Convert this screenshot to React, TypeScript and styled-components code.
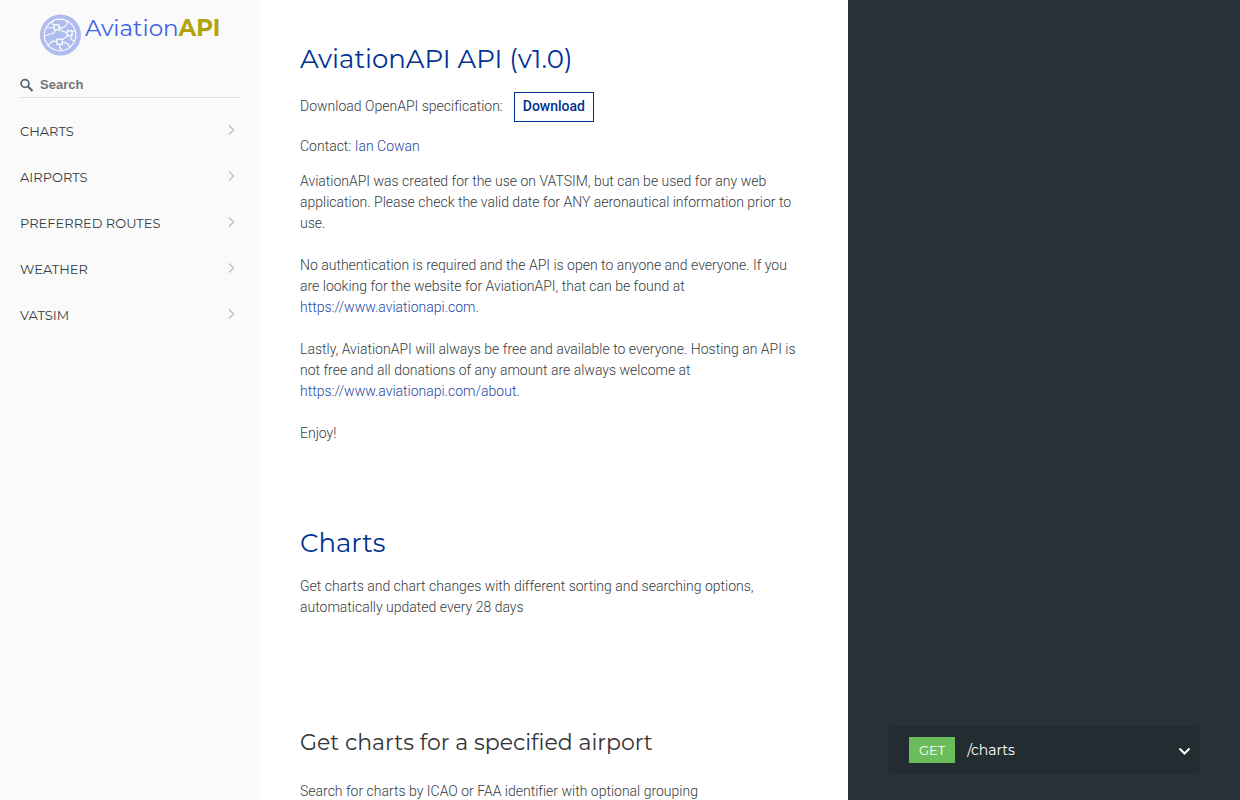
import React from "react";
import styled, { createGlobalStyle } from "styled-components";

const headingFont = `Montserrat, Inter, "Open Sans", sans-serif`;
const bodyFont = `Roboto, "Liberation Sans", sans-serif`;
const textColor = "#353c42";

const GlobalStyle = createGlobalStyle`
  *, *::before, *::after { box-sizing: border-box; }
  body {
    margin: 0;
    background: #fff;
    color: ${textColor};
    font-family: ${bodyFont};
    font-size: 14px;
    font-weight: 300;
    line-height: 21px;
    text-rendering: optimizeSpeed;
    -webkit-font-smoothing: antialiased;
  }
`;

const Page = styled.div`
  display: flex;
  min-height: 100vh;
`;

const Sidebar = styled.aside`
  flex: 0 0 260px;
  align-self: flex-start;
  position: sticky;
  top: 0;
  height: 100vh;
  background: #fafafa;
  display: flex;
  flex-direction: column;
`;

const LogoLink = styled.a`
  display: flex;
  gap: 4px;
  padding: 14px 0 0 39px;
  text-decoration: none;
`;

const LogoMark = styled.svg`
  flex: none;
  width: 42px;
  height: 42px;
`;

const LogoText = styled.span`
  font-family: ${headingFont};
  font-size: 23px;
  font-weight: 400;
  line-height: 28px;
  color: #3f62e6;
  white-space: nowrap;

  b {
    color: #b0a310;
    font-weight: 700;
  }
`;

const SearchBox = styled.label`
  display: flex;
  align-items: center;
  gap: 6px;
  margin: 17px 20px 0;
  height: 25px;
  border-bottom: 1px solid #e1e1e1;

  svg {
    flex: none;
    width: 14px;
    height: 14px;
  }
`;

const SearchInput = styled.input`
  flex: 1;
  min-width: 0;
  height: 22px;
  margin-bottom: 2px;
  border: 0;
  padding: 0;
  outline: none;
  background: transparent;
  color: #263238;
  font-family: "Liberation Sans", Arial, sans-serif;
  font-size: 13px;
  font-weight: 700;

  &::placeholder {
    color: #757575;
    opacity: 1;
  }
`;

const Menu = styled.ul`
  list-style: none;
  margin: 10px 0 0;
  padding: 0;
`;

const MenuLink = styled.a`
  display: flex;
  align-items: center;
  justify-content: space-between;
  height: 46px;
  padding: 0 20px;
  color: ${textColor};
  font-family: ${headingFont};
  font-size: 13px;
  font-weight: 400;
  text-transform: uppercase;
  text-decoration: none;

  svg {
    width: 18px;
    height: 18px;
  }
`;

const Content = styled.main`
  flex: 1;
  min-width: 0;
  display: flex;
  flex-direction: column;
`;

const Row = styled.section<{ $grow?: boolean }>`
  display: grid;
  grid-template-columns: 3fr 2fr;
  flex: ${(p) => (p.$grow ? 1 : "none")};
`;

const Middle = styled.div<{ $bottom?: number }>`
  padding: 40px 40px ${(p) => p.$bottom ?? 40}px;

  p {
    margin: 0 0 21px;
  }

  p:last-child {
    margin-bottom: 0;
  }
`;

const Samples = styled.div`
  background: #263238;
  padding: 40px 40px 0;
`;

const Title = styled.h1`
  margin: 0 0 14px;
  color: #003292;
  font-family: ${headingFont};
  font-size: 26px;
  font-weight: 400;
  line-height: 38px;
`;

const OperationTitle = styled.h2`
  margin: 0 0 21px;
  color: #333;
  font-family: ${headingFont};
  font-size: 22px;
  font-weight: 400;
  line-height: 34px;
`;

const DownloadLine = styled.div`
  display: flex;
  align-items: baseline;
  gap: 11px;
  height: 30px;
`;

const DownloadLink = styled.a`
  border: 1px solid #003292;
  padding: 3px 8px 4px;
  color: #003292;
  font-weight: 500;
  text-decoration: none;
`;

const Contact = styled.div`
  margin: 14px 0;
`;

const TextLink = styled.a`
  color: #1f47a3;
  text-decoration: none;
`;

const Endpoint = styled.button`
  display: flex;
  align-items: center;
  width: 100%;
  height: 48px;
  padding: 0 8px 0 21px;
  border: 0;
  border-radius: 4px;
  background: #222c31;
  color: #fff;
  font-family: ${headingFont};
  font-size: 14px;
  text-align: left;
  text-rendering: optimizeSpeed;
  cursor: pointer;

  svg {
    width: 15px;
    height: 15px;
    margin-left: auto;
  }
`;

const Verb = styled.span`
  padding: 3px 10px;
  margin-right: 12px;
  background: #6bbd5b;
  font-size: 13px;
  line-height: 20px;
`;

const groups = ["Charts", "Airports", "Preferred Routes", "Weather", "VATSIM"];

const Globe = () => (
  <LogoMark viewBox="0 0 42 42" aria-hidden="true">
    <circle cx="21.5" cy="21" r="20.5" fill="#aebcf0" />
    <g fill="none" stroke="#fafafa" strokeWidth="1.2">
      <circle cx="21" cy="21" r="15.8" />
      <path d="M15 6.5 Q11 10 15.5 11 M20 12.5 Q23 16 26 12 Q30 10 27 7" />
      <path d="M7 14 L15 13.5 M16 16 Q16 20 11 20 L5.5 22" />
      <path d="M20 15.5 L28 19 M29 21.5 L23 26 M18 27.5 L14 27 L9 31" />
      <path d="M33.5 18 L36.5 17 M32 22 Q31 26 35.5 27 M23.5 28.5 Q28 28 31 33" />
      <path d="M20.5 30.5 Q20 34 23 36.5" />
    </g>
    <g fill="#aebcf0" stroke="#fafafa" strokeWidth="1.4">
      <rect x="15.3" y="11" width="4.8" height="4.8" />
      <rect x="28.3" y="16.8" width="4.8" height="4.8" />
      <rect x="18" y="25.2" width="5.2" height="5.2" />
    </g>
  </LogoMark>
);

const SearchIcon = () => (
  <svg viewBox="0 0 14 14" fill="none" stroke="#52667a" aria-hidden="true">
    <circle cx="5" cy="5.5" r="3.9" strokeWidth="1.7" />
    <path d="M8 8.5 L12.5 13" strokeWidth="2.2" />
  </svg>
);

const MenuChevron = () => (
  <svg viewBox="0 0 18 18" fill="none" stroke="#c4c4c4" strokeWidth="1.6" aria-hidden="true">
    <path d="M7 3.5 L11.5 8 L7 12.5" />
  </svg>
);

export default function App() {
  return (
    <>
      <GlobalStyle />
      <Page>
        <Sidebar>
          <LogoLink href="#" aria-label="AviationAPI">
            <Globe />
            <LogoText>
              Aviation<b>API</b>
            </LogoText>
          </LogoLink>
          <SearchBox>
            <SearchIcon />
            <SearchInput type="text" placeholder="Search" aria-label="Search" />
          </SearchBox>
          <nav>
            <Menu>
              {groups.map((name) => (
                <li key={name}>
                  <MenuLink href={"#" + name}>
                    {name}
                    <MenuChevron />
                  </MenuLink>
                </li>
              ))}
            </Menu>
          </nav>
        </Sidebar>
        <Content>
          <Row>
            <Middle>
              <Title>AviationAPI API (v1.0)</Title>
              <DownloadLine>
                <span>Download OpenAPI specification:</span>
                <DownloadLink href="#download">Download</DownloadLink>
              </DownloadLine>
              <Contact>
                Contact: <TextLink href="#contact">Ian Cowan</TextLink>
              </Contact>
              <p>
                AviationAPI was created for the use on VATSIM, but can be used for any web
                application. Please check the valid date for ANY aeronautical information prior to
                use.
              </p>
              <p>
                No authentication is required and the API is open to anyone and everyone. If you
                are looking for the website for AviationAPI, that can be found at{" "}
                <TextLink href="#site">https://www.aviationapi.com</TextLink>.
              </p>
              <p>
                Lastly, AviationAPI will always be free and available to everyone. Hosting an API
                is not free and all donations of any amount are always welcome at{" "}
                <TextLink href="#about">https://www.aviationapi.com/about</TextLink>.
              </p>
              <p>Enjoy!</p>
            </Middle>
            <Samples />
          </Row>
          <Row id="Charts">
            <Middle $bottom={68}>
              <Title>Charts</Title>
              <p>
                Get charts and chart changes with different sorting and searching options,
                automatically updated every 28 days
              </p>
            </Middle>
            <Samples />
          </Row>
          <Row $grow>
            <Middle>
              <OperationTitle>Get charts for a specified airport</OperationTitle>
              <p>Search for charts by ICAO or FAA identifier with optional grouping</p>
            </Middle>
            <Samples>
              <Endpoint type="button">
                <Verb>GET</Verb>
                /charts
                <svg viewBox="0 0 15 15" fill="none" stroke="#fff" strokeWidth="2" aria-hidden="true">
                  <path d="M2.5 5.5 L7.5 10.5 L12.5 5.5" />
                </svg>
              </Endpoint>
            </Samples>
          </Row>
        </Content>
      </Page>
    </>
  );
}
